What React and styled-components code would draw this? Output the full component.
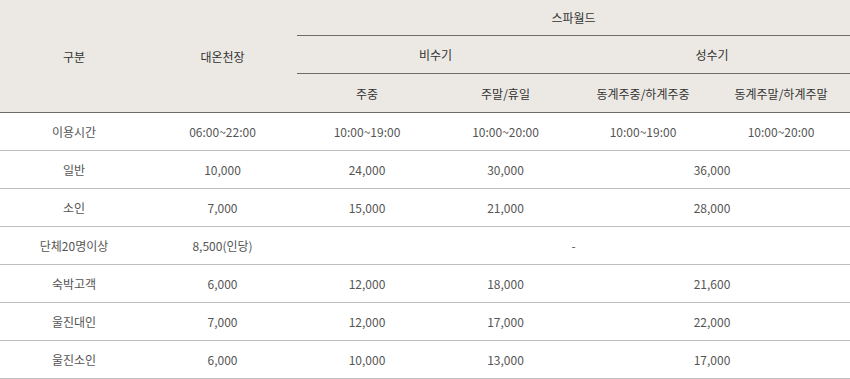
import React from "react";
import styled, { createGlobalStyle } from "styled-components";

const GlobalStyle = createGlobalStyle`
  html, body {
    margin: 0;
    padding: 0;
    background: #fff;
  }
  body {
    font-family: "Noto Sans CJK KR", "Noto Sans", sans-serif;
  }
`;

const cols = [148, 149, 140, 137, 138, 138];

const rows = [
  { label: "이용시간", cells: ["06:00~22:00", "10:00~19:00", "10:00~20:00", "10:00~19:00", "10:00~20:00"] },
  { label: "일반", cells: ["10,000", "24,000", "30,000", { text: "36,000", span: 2 }] },
  { label: "소인", cells: ["7,000", "15,000", "21,000", { text: "28,000", span: 2 }] },
  { label: "단체20명이상", cells: ["8,500(인당)", { text: "-", span: 4 }] },
  { label: "숙박고객", cells: ["6,000", "12,000", "18,000", { text: "21,600", span: 2 }] },
  { label: "울진대인", cells: ["7,000", "12,000", "17,000", { text: "22,000", span: 2 }] },
  { label: "울진소인", cells: ["6,000", "10,000", "13,000", { text: "17,000", span: 2 }] },
];

export default function App() {
  return (
    <>
      <GlobalStyle />
      <Tabla>
        <colgroup>
          {cols.map((w, i) => (
            <col key={i} style={{ width: w }} />
          ))}
        </colgroup>
        <thead>
          <tr>
            <Th rowSpan={3} $h={36}>구분</Th>
            <Th rowSpan={3} $h={36}>대온천장</Th>
            <Th colSpan={4} $h={35} $line>스파월드</Th>
          </tr>
          <tr>
            <Th colSpan={2} $h={37} $line>비수기</Th>
            <Th colSpan={2} $h={37} $line>성수기</Th>
          </tr>
          <tr>
            <Th $h={38}>주중</Th>
            <Th $h={38}>주말/휴일</Th>
            <Th $h={38}>동계주중/하계주중</Th>
            <Th $h={38}>동계주말/하계주말</Th>
          </tr>
        </thead>
        <tbody>
          {rows.map((r) => (
            <tr key={r.label}>
              <Td>{r.label}</Td>
              {r.cells.map((c, i) =>
                typeof c === "string" ? (
                  <Td key={i}>{c}</Td>
                ) : (
                  <Td key={i} colSpan={c.span}>{c.text}</Td>
                )
              )}
            </tr>
          ))}
        </tbody>
      </Tabla>
    </>
  );
}

const Tabla = styled.table`
  width: 850px;
  table-layout: fixed;
  border-collapse: collapse;
  border-spacing: 0;
  font-size: 12px;
  thead {
    background: #ece9e4;
    border-bottom: 1px solid #6f6b66;
  }
`;

const Th = styled.th`
  height: ${(p) => p.$h}px;
  padding: 0;
  font-weight: 400;
  color: #333;
  text-align: center;
  vertical-align: middle;
  border-bottom: ${(p) => (p.$line ? "1px solid #6f6b66" : "none")};
`;

const Td = styled.td`
  height: 37px;
  padding: 0;
  color: #555;
  text-align: center;
  vertical-align: middle;
  border-bottom: 1px solid #bdbdbd;
`;
